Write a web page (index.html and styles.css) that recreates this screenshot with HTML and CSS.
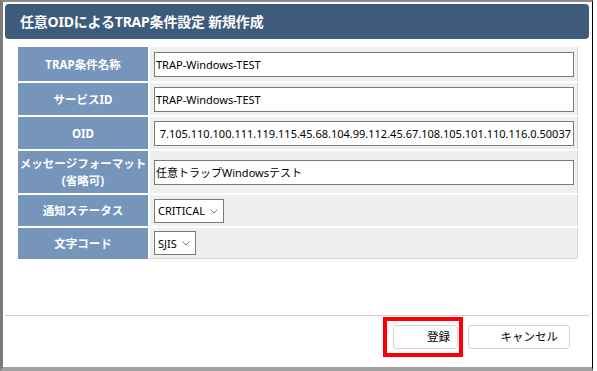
FILE: index.html
```html
<!DOCTYPE html>
<html lang="ja">
<head>
<meta charset="utf-8">
<link rel="stylesheet" href="styles.css">
</head>
<body>
<div class="frame">
  <div class="header">任意OIDによるTRAP条件設定 新規作成</div>
  <div class="content">
    <table class="form">
      <colgroup><col class="c-label"><col class="c-value"></colgroup>
      <tr class="r1">
        <th>TRAP条件名称</th>
        <td><div class="field">TRAP-Windows-TEST</div></td>
      </tr>
      <tr class="r2">
        <th>サービスID</th>
        <td><div class="field">TRAP-Windows-TEST</div></td>
      </tr>
      <tr class="r3">
        <th>OID</th>
        <td><div class="field end"><span>7.105.110.100.111.119.115.45.68.104.99.112.45.67.108.105.101.110.116.0.50037</span></div></td>
      </tr>
      <tr class="r4">
        <th>メッセージフォーマット<br>(省略可)</th>
        <td><div class="field">任意トラップWindowsテスト</div></td>
      </tr>
      <tr class="r5">
        <th>通知ステータス</th>
        <td><div class="select"><span>CRITICAL</span><svg width="8" height="5" viewBox="0 0 8 5"><path d="M0.5 0.5 L4 4 L7.5 0.5" fill="none" stroke="#777" stroke-width="1"/></svg></div></td>
      </tr>
      <tr class="r6">
        <th>文字コード</th>
        <td><div class="select"><span>SJIS</span><svg width="8" height="5" viewBox="0 0 8 5"><path d="M0.5 0.5 L4 4 L7.5 0.5" fill="none" stroke="#777" stroke-width="1"/></svg></div></td>
      </tr>
    </table>
  </div>
  <div class="footer">
    <div class="btn primary">登録<span class="mark"></span></div>
    <div class="btn cancel">キャンセル</div>
  </div>
</div>
</body>
</html>
```
FILE: styles.css
```css
html, body {
  margin: 0;
  padding: 0;
  background: #fff;
}
body {
  width: 597px;
  height: 371px;
  overflow: hidden;
  font-family: "Noto Sans", "Noto Sans CJK JP", sans-serif;
  color: #000;
}
.frame {
  box-sizing: border-box;
  width: 593px;
  height: 371px;
  border-left: 3px solid #7b7b7b;
  border-top: 2px solid #8a8a8a;
  border-right: 1px solid #000;
  border-bottom: 4px solid #a0a0a0;
  display: flex;
  flex-direction: column;
}
.header {
  flex: none;
  margin: 2px 3px 0 2px;
  height: 35px;
  background: #3e5b7b;
  border-radius: 4px;
  color: #fff;
  font-weight: bold;
  font-size: 14px;
  line-height: 35px;
  padding-left: 15px;
  letter-spacing: -0.2px;
}
.content {
  flex: 1;
  min-height: 0;
  padding: 6px 0 0 13px;
}
.form {
  table-layout: fixed;
  border-collapse: separate;
  border-spacing: 2px;
  width: 564px;
  background: #fff;
}
.c-label { width: 130px; }
.form th {
  padding: 0;
  background: #7595ba;
  color: #fff;
  font-size: 11.5px;
  font-weight: bold;
  text-align: center;
  line-height: 17px;
  white-space: nowrap;
}
.form td {
  padding: 0 3px 0 4px;
  background: #efefef;
  border-right: 1px solid #d6d6d6;
  overflow: hidden;
}
.r1 { height: 34px; }
.r2 { height: 32px; }
.r3 { height: 32px; }
.r4 { height: 42px; }
.r5 { height: 31px; }
.r6 { height: 31px; }
.form .r6 td { border-bottom: 1px solid #d6d6d6; }
.field {
  box-sizing: border-box;
  width: 100%;
  height: 25px;
  border: 1px solid #7a7a7a;
  background: #fff;
  font-size: 11px;
  line-height: 23px;
  padding-left: 1px;
  white-space: nowrap;
  overflow: hidden;
  display: flex;
}
.field.end {
  justify-content: flex-end;
  padding-right: 2px;
}
.field span { flex: none; }
.select {
  box-sizing: border-box;
  display: inline-flex;
  align-items: center;
  gap: 5px;
  height: 24px;
  border: 1px solid #7a7a7a;
  background: #fff;
  font-size: 11px;
  padding: 0 5px 0 3px;
  vertical-align: middle;
}
.select svg { flex: none; margin-top: 1px; }
.footer {
  flex: none;
  box-sizing: border-box;
  margin: 0 3px 0 2px;
  border-top: 1px solid #cfcfcf;
  height: 52px;
  display: flex;
  justify-content: flex-end;
  align-items: flex-start;
  gap: 10px;
  padding: 9px 19px 0 0;
}
.btn {
  position: relative;
  box-sizing: border-box;
  height: 24px;
  border: 1px solid #d4d4d4;
  border-radius: 3px;
  background: #fff;
  font-size: 11.5px;
  line-height: 22px;
  text-align: right;
}
.primary {
  width: 65px;
  padding-right: 7px;
}
.cancel {
  width: 102px;
  padding-right: 11px;
}
.mark {
  position: absolute;
  left: -11px;
  top: -9px;
  width: 72px;
  height: 32px;
  border: 4px solid #f00;
}
```
